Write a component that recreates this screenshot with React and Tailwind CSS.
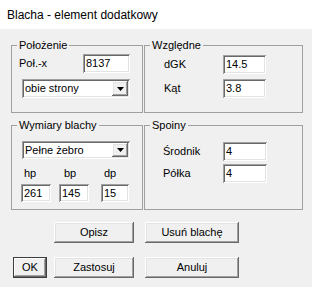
import React from "react";

const sunken =
  "bg-white shadow-[inset_1px_1px_0_#a0a0a0,inset_-1px_-1px_0_#ffffff,inset_2px_2px_0_#696969,inset_-2px_-2px_0_#e3e3e3]";
const raised =
  "bg-[#f0f0f0] shadow-[inset_-1px_-1px_0_#696969,inset_1px_1px_0_#ffffff,inset_-2px_-2px_0_#a0a0a0,inset_2px_2px_0_#e3e3e3]";

function Input({ value, w, h = 19 }) {
  return (
    <div
      className={`${sunken} flex items-center pl-[3px] leading-[13px]`}
      style={{ width: w, height: h }}
    >
      {value}
    </div>
  );
}

function Combo({ value, h = 19 }) {
  return (
    <div
      className={`${sunken} w-[108px] flex items-center justify-between pl-[3px] pr-[2px] leading-[13px]`}
      style={{ height: h }}
    >
      <span>{value}</span>
      <div className={`${raised} w-[16px] h-[calc(100%-4px)] flex items-center justify-center`}>
        <svg width="7" height="4" viewBox="0 0 7 4">
          <path d="M0 0H7L3.5 4Z" fill="#000" />
        </svg>
      </div>
    </div>
  );
}

function Group({ title, w, h, children }) {
  return (
    <fieldset
      className="border border-[#a0a0a0] m-0 p-0 min-w-0"
      style={{ width: w, height: h }}
    >
      <legend className="ml-[5px] px-[2px] leading-[13px]">{title}</legend>
      {children}
    </fieldset>
  );
}

function Button({ children, w, def }) {
  return (
    <div
      className={`${raised} h-[21px] flex items-center justify-center leading-[13px] ${
        def ? "outline outline-1 outline-[#3c3c3c] -outline-offset-1 shadow-[inset_-2px_-2px_0_#696969,inset_2px_2px_0_#ffffff,inset_-3px_-3px_0_#a0a0a0,inset_1px_1px_0_#3c3c3c,inset_-1px_-1px_0_#3c3c3c]" : ""
      }`}
      style={{ width: w }}
    >
      {children}
    </div>
  );
}

export default function App() {
  return (
    <div className="w-[312px] h-[287px] overflow-hidden font-['Liberation_Sans',Arial,sans-serif] text-[11px] text-black">
      <div className="h-[29px] bg-white pl-[7px] pt-[8px] text-[12px] leading-[14px]">
        Blacha - element dodatkowy
      </div>
      <div className="bg-[#f0f0f0] h-[258px] pl-[11px] pt-[10px]">
        <div className="flex gap-[1px]">
          <Group title="Położenie" w={132} h={74}>
            <div className="pl-[7px] pt-[2px]">
              <div className="flex items-center">
                <span className="w-[64px]">Poł.-x</span>
                <Input value="8137" w={47} />
              </div>
              <div className="mt-[6px] ml-[3px]">
                <Combo value="obie strony" />
              </div>
            </div>
          </Group>
          <Group title="Względne" w={159} h={74}>
            <div className="pl-[19px] pt-[3px] flex flex-col gap-[5px]">
              <div className="flex items-center">
                <span className="w-[59px]">dGK</span>
                <Input value="14.5" w={43} />
              </div>
              <div className="flex items-center">
                <span className="w-[59px]">Kąt</span>
                <Input value="3.8" w={43} />
              </div>
            </div>
          </Group>
        </div>
        <div className="flex gap-[1px] mt-[6px]">
          <Group title="Wymiary blachy" w={132} h={91}>
            <div className="pt-[9px]">
              <div className="pl-[10px]">
                <Combo value="Pełne żebro" h={18} />
              </div>
              <div className="flex pl-[9px] mt-[8px]">
                <div className="w-[30px]">
                  <div className="pl-[3px] leading-[13px]">hp</div>
                  <div className="mt-[4px]">
                    <Input value="261" w={30} h={18} />
                  </div>
                </div>
                <div className="w-[30px] ml-[8px]">
                  <div className="pl-[5px] leading-[13px]">bp</div>
                  <div className="mt-[4px]">
                    <Input value="145" w={30} h={18} />
                  </div>
                </div>
                <div className="w-[28px] ml-[12px]">
                  <div className="pl-[3px] leading-[13px]">dp</div>
                  <div className="mt-[4px]">
                    <Input value="15" w={28} h={18} />
                  </div>
                </div>
              </div>
            </div>
          </Group>
          <Group title="Spoiny" w={159} h={91}>
            <div className="pl-[18px] pt-[10px] flex flex-col gap-[3px]">
              <div className="flex items-center">
                <span className="w-[60px]">Środnik</span>
                <Input value="4" w={44} />
              </div>
              <div className="flex items-center">
                <span className="w-[60px]">Półka</span>
                <Input value="4" w={44} />
              </div>
            </div>
          </Group>
        </div>
        <div className="flex mt-[12px] ml-[43px] gap-[11px]">
          <Button w={80}>Opisz</Button>
          <Button w={94}>Usuń blachę</Button>
        </div>
        <div className="flex mt-[14px] ml-[2px]">
          <Button w={34} def>
            OK
          </Button>
          <div className="ml-[7px]">
            <Button w={80}>Zastosuj</Button>
          </div>
          <div className="ml-[11px]">
            <Button w={94}>Anuluj</Button>
          </div>
        </div>
      </div>
    </div>
  );
}
